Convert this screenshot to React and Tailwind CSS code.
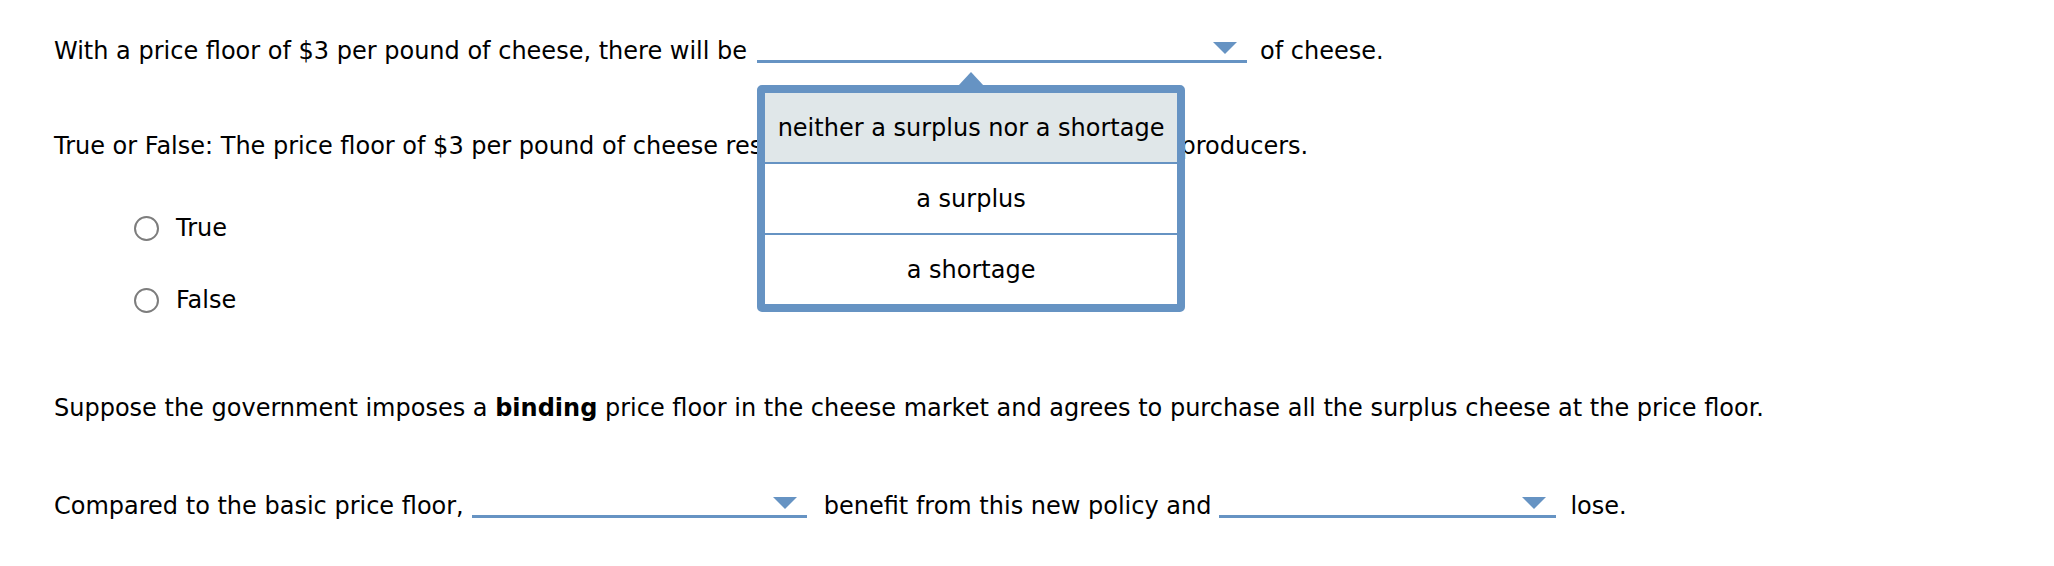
import React from 'react'

const Caret = () => (
  <svg width="24" height="12" viewBox="0 0 24 12" className="absolute right-[10px] bottom-[6px]">
    <polygon points="0,0 24,0 12,12" fill="#6693c3" />
  </svg>
)

const Dropdown = ({ width, children }) => (
  <span className={`relative inline-block h-[30px] -mb-[4px] border-b-[3px] border-[#6693c3] ${width}`}>
    <Caret />
    {children}
  </span>
)

const Radio = ({ label }) => (
  <div className="flex items-center pl-[80px] h-[30px]">
    <span className="w-[25px] h-[25px] rounded-full border-2 border-[#7d7d7d] bg-white" />
    <span className="ml-[17px]">{label}</span>
  </div>
)

const options = ['neither a surplus nor a shortage', 'a surplus', 'a shortage']

// open menu of the first blank
const Menu = () => (
  <div className="absolute left-0 top-[calc(100%+25px)] z-10 w-[428px]">
    <svg width="26" height="14" viewBox="0 0 26 14" className="absolute left-[201px] top-[-13px]">
      <polygon points="0,14 13,0 26,14" fill="#6693c3" />
    </svg>
    <div className="rounded-[5px] border-[8px] border-[#6693c3] bg-white overflow-hidden">
      {options.map((o, i) => (
        <div
          key={o}
          className={`h-[69px] box-content flex items-center justify-center whitespace-nowrap ${i === 0 ? 'bg-[#e0e7e9]' : 'border-t-2 border-[#6693c3]'}`}
        >
          {o}
        </div>
      ))}
    </div>
  </div>
)

export default function App() {
  return (
    <div className="bg-white w-[2054px] h-[566px] pl-[54px] pt-[33px] text-[24px] leading-[30px] text-black font-['DejaVu_Sans','Verdana',sans-serif]">
      <div className="flex items-end">
        <span>With a price floor of $3 per pound of cheese, there will be</span>
        <span className="ml-[10px]">
          <Dropdown width="w-[490px]">
            <Menu />
          </Dropdown>
        </span>
        <span className="ml-[13px]">of cheese.</span>
      </div>

      <div className="mt-[65px]">
        True or False: The price floor of $3 per pound of cheese results in greater revenues for all the producers.
      </div>

      <div className="mt-[52px]">
        <Radio label="True" />
        <div className="mt-[42px]">
          <Radio label="False" />
        </div>
      </div>

      <div className="mt-[78px]">
        Suppose the government imposes a <b>binding</b> price floor in the cheese market and agrees to purchase all the surplus cheese at the price floor.
      </div>

      <div className="mt-[65px] flex items-end">
        <span>Compared to the basic price floor,</span>
        <span className="ml-[8px]"><Dropdown width="w-[335px]" /></span>
        <span className="ml-[17px]">benefit from this new policy and</span>
        <span className="ml-[8px]"><Dropdown width="w-[337px]" /></span>
        <span className="ml-[14px]">lose.</span>
      </div>
    </div>
  )
}
